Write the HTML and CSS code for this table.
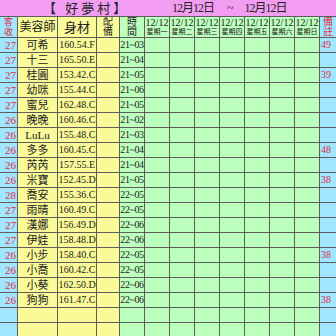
FILE: index.html
```html
<!DOCTYPE html>
<html lang="zh-Hant">
<head>
<meta charset="utf-8">
<title>好夢村</title>
<link rel="stylesheet" href="styles.css">
</head>
<body>
<div class="sheet">
  <div class="title">
    <div class="t-left"><span class="brand">【 好夢村】</span></div>
    <div class="t-right"><span class="date">12月12日</span><span class="tilde">~</span><span class="date">12月12日</span></div>
  </div>

  <div class="c blue red stack h-no"><span>客</span><span>收</span></div>
  <div class="c yel h-big">美容師</div>
  <div class="c yel h-big2">身材</div>
  <div class="c yel stack h-two"><span>配</span><span>備</span></div>
  <div class="c grn stack h-two"><span>時</span><span>間</span></div>
  <div class="c grn stack day"><span class="dt">12/12</span><span class="wk">星期一</span></div>
  <div class="c grn stack day"><span class="dt">12/12</span><span class="wk">星期二</span></div>
  <div class="c grn stack day"><span class="dt">12/12</span><span class="wk">星期三</span></div>
  <div class="c grn stack day"><span class="dt">12/12</span><span class="wk">星期四</span></div>
  <div class="c grn stack day"><span class="dt">12/12</span><span class="wk">星期五</span></div>
  <div class="c grn stack day"><span class="dt">12/12</span><span class="wk">星期六</span></div>
  <div class="c grn stack day"><span class="dt">12/12</span><span class="wk">星期日</span></div>
  <div class="c blue red stack h-two"><span>備</span><span>註</span></div>

  <div class="c blue red no">27</div><div class="c yel nm">可希</div><div class="c yel bd">160.54.F</div><div class="c yel"></div><div class="c grn tm">21~03</div><div class="c grn"></div><div class="c grn"></div><div class="c grn"></div><div class="c grn"></div><div class="c grn"></div><div class="c grn"></div><div class="c grn"></div><div class="c blue red rm">49</div>
  <div class="c blue red no">27</div><div class="c yel nm">十三</div><div class="c yel bd">165.50.E</div><div class="c yel"></div><div class="c grn tm">21~04</div><div class="c grn"></div><div class="c grn"></div><div class="c grn"></div><div class="c grn"></div><div class="c grn"></div><div class="c grn"></div><div class="c grn"></div><div class="c blue red rm"></div>
  <div class="c blue red no">27</div><div class="c yel nm">桂圓</div><div class="c yel bd">153.42.C</div><div class="c yel"></div><div class="c grn tm">21~05</div><div class="c grn"></div><div class="c grn"></div><div class="c grn"></div><div class="c grn"></div><div class="c grn"></div><div class="c grn"></div><div class="c grn"></div><div class="c blue red rm">39</div>
  <div class="c blue red no">27</div><div class="c yel nm">幼咪</div><div class="c yel bd">155.44.C</div><div class="c yel"></div><div class="c grn tm">21~06</div><div class="c grn"></div><div class="c grn"></div><div class="c grn"></div><div class="c grn"></div><div class="c grn"></div><div class="c grn"></div><div class="c grn"></div><div class="c blue red rm"></div>
  <div class="c blue red no">27</div><div class="c yel nm">蜜兒</div><div class="c yel bd">162.48.C</div><div class="c yel"></div><div class="c grn tm">21~05</div><div class="c grn"></div><div class="c grn"></div><div class="c grn"></div><div class="c grn"></div><div class="c grn"></div><div class="c grn"></div><div class="c grn"></div><div class="c blue red rm"></div>
  <div class="c blue red no">26</div><div class="c yel nm">晚晚</div><div class="c yel bd">160.46.C</div><div class="c yel"></div><div class="c grn tm">21~02</div><div class="c grn"></div><div class="c grn"></div><div class="c grn"></div><div class="c grn"></div><div class="c grn"></div><div class="c grn"></div><div class="c grn"></div><div class="c blue red rm"></div>
  <div class="c blue red no">26</div><div class="c yel nm lat">LuLu</div><div class="c yel bd">155.48.C</div><div class="c yel"></div><div class="c grn tm">21~03</div><div class="c grn"></div><div class="c grn"></div><div class="c grn"></div><div class="c grn"></div><div class="c grn"></div><div class="c grn"></div><div class="c grn"></div><div class="c blue red rm"></div>
  <div class="c blue red no">26</div><div class="c yel nm">多多</div><div class="c yel bd">160.45.C</div><div class="c yel"></div><div class="c grn tm">21~04</div><div class="c grn"></div><div class="c grn"></div><div class="c grn"></div><div class="c grn"></div><div class="c grn"></div><div class="c grn"></div><div class="c grn"></div><div class="c blue red rm">48</div>
  <div class="c blue red no">26</div><div class="c yel nm">芮芮</div><div class="c yel bd">157.55.E</div><div class="c yel"></div><div class="c grn tm">21~04</div><div class="c grn"></div><div class="c grn"></div><div class="c grn"></div><div class="c grn"></div><div class="c grn"></div><div class="c grn"></div><div class="c grn"></div><div class="c blue red rm"></div>
  <div class="c blue red no">26</div><div class="c yel nm">米寶</div><div class="c yel bd">152.45.D</div><div class="c yel"></div><div class="c grn tm">21~05</div><div class="c grn"></div><div class="c grn"></div><div class="c grn"></div><div class="c grn"></div><div class="c grn"></div><div class="c grn"></div><div class="c grn"></div><div class="c blue red rm">38</div>
  <div class="c blue red no">28</div><div class="c yel nm">喬安</div><div class="c yel bd">155.36.C</div><div class="c yel"></div><div class="c grn tm">22~05</div><div class="c grn"></div><div class="c grn"></div><div class="c grn"></div><div class="c grn"></div><div class="c grn"></div><div class="c grn"></div><div class="c grn"></div><div class="c blue red rm"></div>
  <div class="c blue red no">27</div><div class="c yel nm">雨晴</div><div class="c yel bd">160.49.C</div><div class="c yel"></div><div class="c grn tm">22~05</div><div class="c grn"></div><div class="c grn"></div><div class="c grn"></div><div class="c grn"></div><div class="c grn"></div><div class="c grn"></div><div class="c grn"></div><div class="c blue red rm"></div>
  <div class="c blue red no">27</div><div class="c yel nm">漢娜</div><div class="c yel bd">156.49.D</div><div class="c yel"></div><div class="c grn tm">22~06</div><div class="c grn"></div><div class="c grn"></div><div class="c grn"></div><div class="c grn"></div><div class="c grn"></div><div class="c grn"></div><div class="c grn"></div><div class="c blue red rm"></div>
  <div class="c blue red no">27</div><div class="c yel nm">伊娃</div><div class="c yel bd">158.48.D</div><div class="c yel"></div><div class="c grn tm">22~06</div><div class="c grn"></div><div class="c grn"></div><div class="c grn"></div><div class="c grn"></div><div class="c grn"></div><div class="c grn"></div><div class="c grn"></div><div class="c blue red rm"></div>
  <div class="c blue red no">26</div><div class="c yel nm">小步</div><div class="c yel bd">158.40.C</div><div class="c yel"></div><div class="c grn tm">22~05</div><div class="c grn"></div><div class="c grn"></div><div class="c grn"></div><div class="c grn"></div><div class="c grn"></div><div class="c grn"></div><div class="c grn"></div><div class="c blue red rm">38</div>
  <div class="c blue red no">26</div><div class="c yel nm">小喬</div><div class="c yel bd">160.42.C</div><div class="c yel"></div><div class="c grn tm">22~05</div><div class="c grn"></div><div class="c grn"></div><div class="c grn"></div><div class="c grn"></div><div class="c grn"></div><div class="c grn"></div><div class="c grn"></div><div class="c blue red rm"></div>
  <div class="c blue red no">26</div><div class="c yel nm">小葵</div><div class="c yel bd">162.50.D</div><div class="c yel"></div><div class="c grn tm">22~06</div><div class="c grn"></div><div class="c grn"></div><div class="c grn"></div><div class="c grn"></div><div class="c grn"></div><div class="c grn"></div><div class="c grn"></div><div class="c blue red rm"></div>
  <div class="c blue red no">26</div><div class="c yel nm">狗狗</div><div class="c yel bd">161.47.C</div><div class="c yel"></div><div class="c grn tm">22~06</div><div class="c grn"></div><div class="c grn"></div><div class="c grn"></div><div class="c grn"></div><div class="c grn"></div><div class="c grn"></div><div class="c grn"></div><div class="c blue red rm">38</div>
  <div class="c blue"></div><div class="c yel"></div><div class="c yel"></div><div class="c yel"></div><div class="c grn"></div><div class="c grn"></div><div class="c grn"></div><div class="c grn"></div><div class="c grn"></div><div class="c grn"></div><div class="c grn"></div><div class="c grn"></div><div class="c blue"></div>
  <div class="c blue"></div><div class="c yel"></div><div class="c yel"></div><div class="c yel"></div><div class="c grn"></div><div class="c grn"></div><div class="c grn"></div><div class="c grn"></div><div class="c grn"></div><div class="c grn"></div><div class="c grn"></div><div class="c grn"></div><div class="c blue"></div>
</div>
</body>
</html>
```

FILE: styles.css
```css
html, body {
  margin: 0;
  padding: 0;
}

body {
  width: 336px;
  height: 336px;
  overflow: hidden;
  background: #ffffff;
}

.sheet {
  display: grid;
  grid-template-columns: 17px 39px 38px 22px 24px repeat(7, 24px) 16px;
  grid-template-rows: 16px 20px repeat(20, 14px);
  gap: 1px;
  background: #5e5e5e;
  font-family: "Liberation Serif", "Noto Sans CJK TC", serif;
  color: #222222;
}

.title {
  grid-column: 1 / -1;
  background: #f29df2;
  display: flex;
  align-items: center;
  line-height: 1;
}

.t-left {
  width: 145px;
  flex: none;
}

.brand {
  display: inline-block;
  margin-left: 43px;
  font-size: 13px;
  letter-spacing: 3px;
}

.t-right {
  flex: 1;
  display: flex;
  align-items: center;
  padding-left: 27px;
  font-size: 12px;
}

.date {
  letter-spacing: -1px;
}

.tilde {
  margin: 0 11px 0 13px;
}

.c {
  display: flex;
  align-items: center;
  justify-content: center;
  overflow: hidden;
  white-space: nowrap;
  line-height: 1;
}

.blue { background: #a0e6ff; }
.yel { background: #fafa98; }
.grn { background: #bdffbd; }
.red { color: #dc2f3e; }

.stack {
  flex-direction: column;
}

.h-no {
  font-size: 9px;
  line-height: 10px;
}

.h-big {
  font-size: 12px;
}

.h-big2 {
  font-size: 13px;
}

.h-two {
  font-size: 10px;
  line-height: 10px;
}

.day .dt {
  font-size: 10px;
  line-height: 10px;
}

.day .wk {
  font-size: 7px;
  line-height: 9px;
}

.no {
  justify-content: flex-end;
  padding-right: 1px;
  font-size: 11px;
}

.nm {
  font-size: 11px;
}

.bd {
  font-size: 10px;
}

.tm {
  font-size: 10px;
  letter-spacing: -0.4px;
}

.rm {
  justify-content: flex-start;
  padding-left: 1px;
  font-size: 10px;
}
```
